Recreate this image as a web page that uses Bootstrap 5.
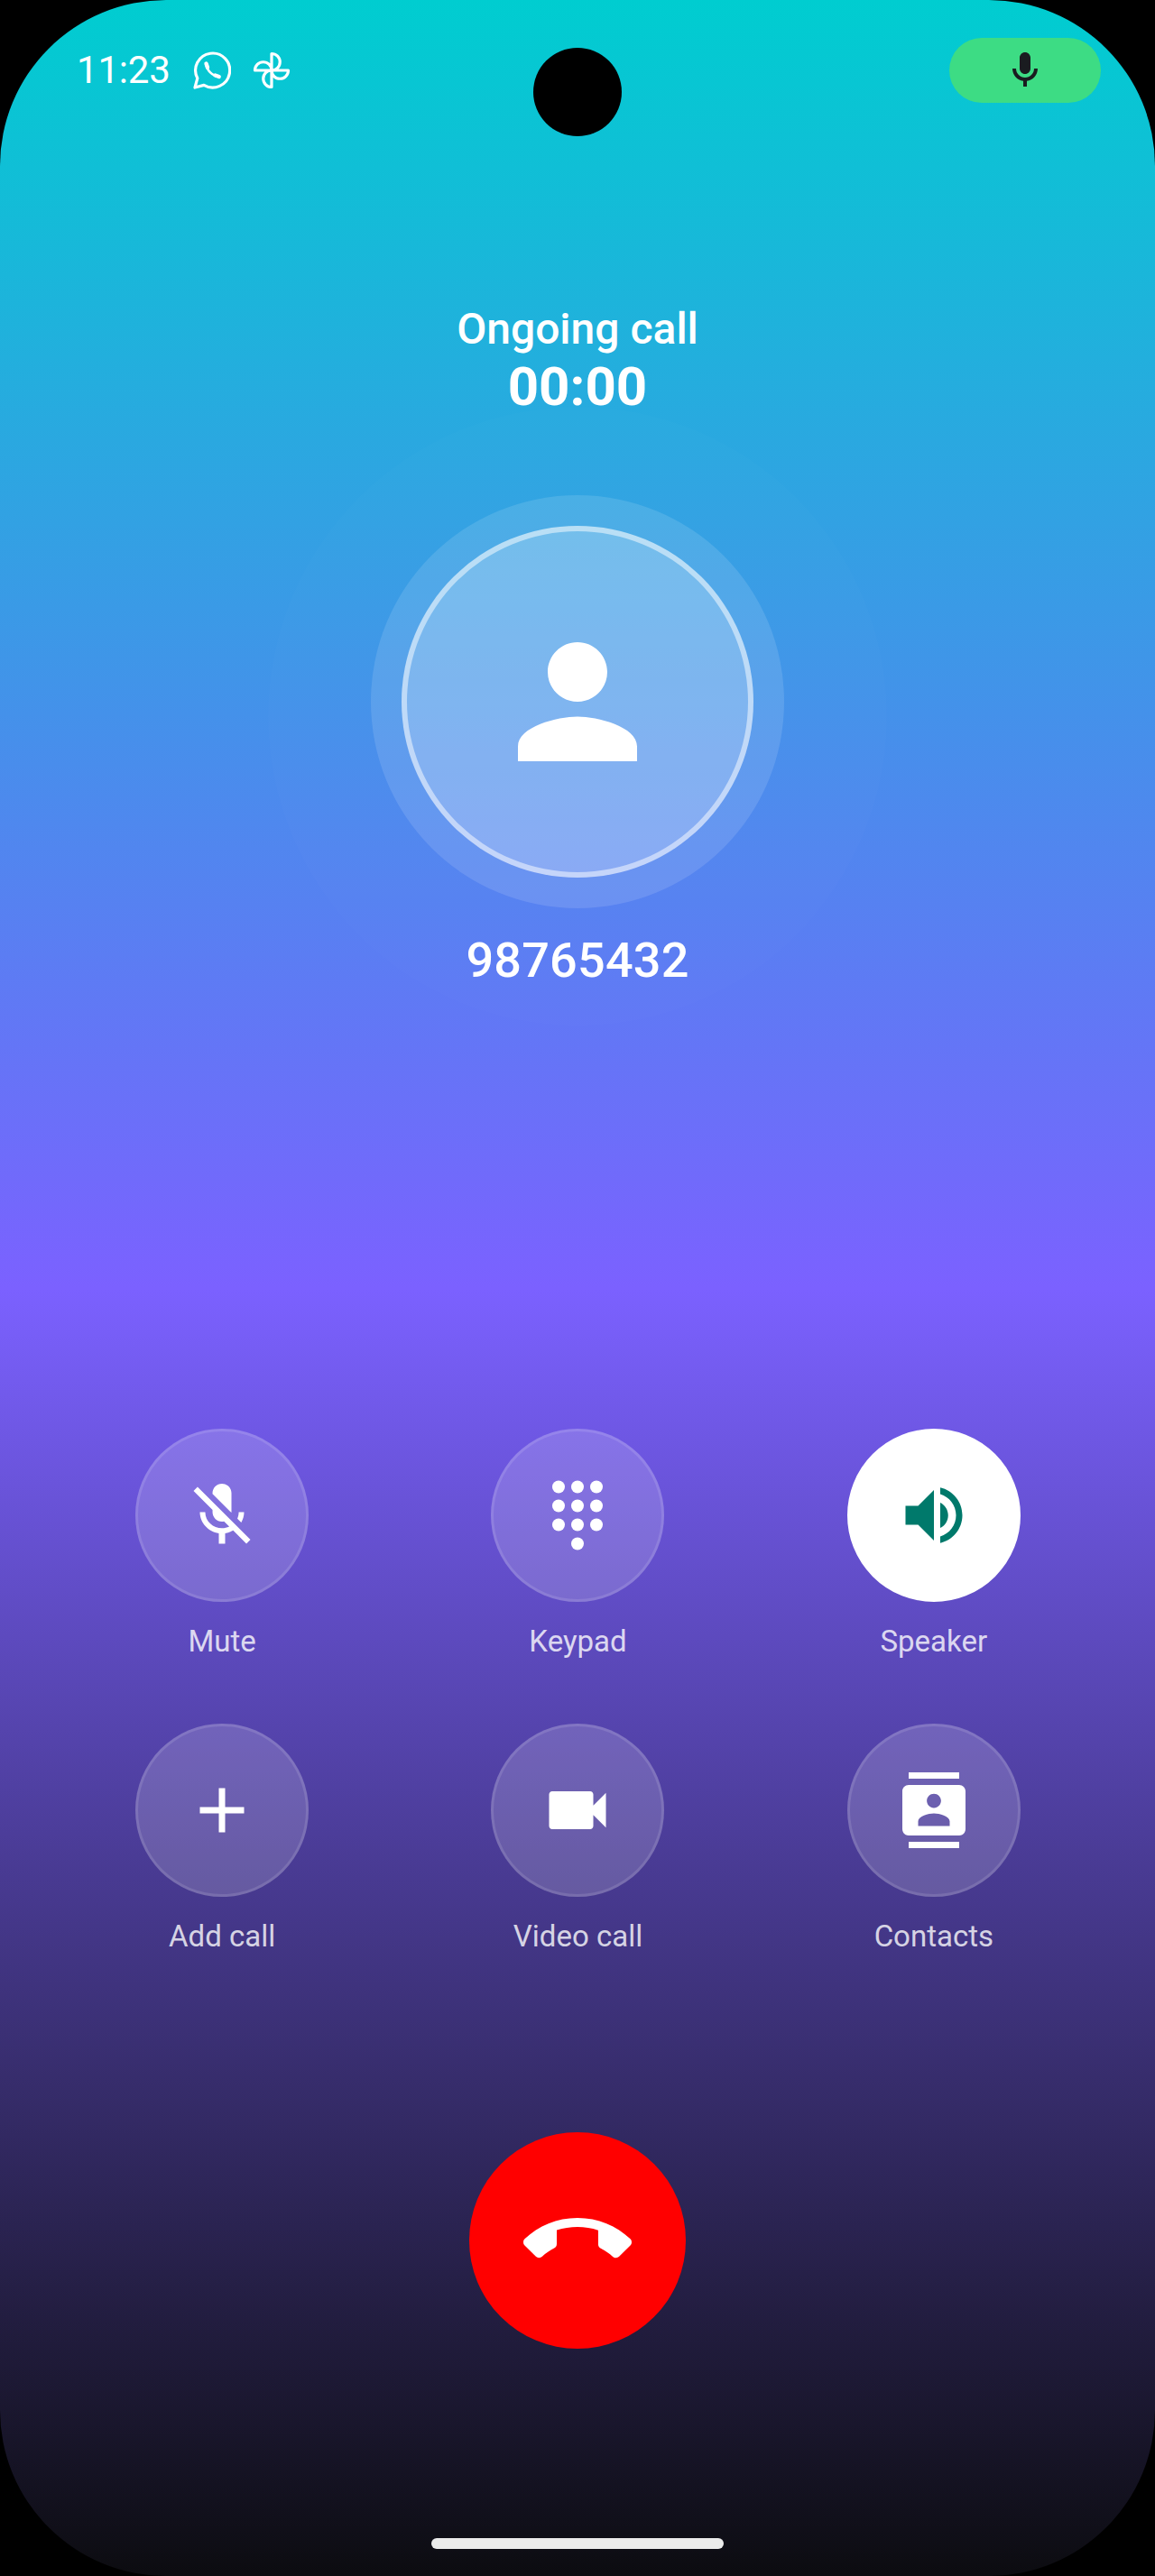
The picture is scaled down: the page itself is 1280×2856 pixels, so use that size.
<!DOCTYPE html>
<html lang="en">
<head>
  <meta charset="UTF-8">
  <title>Ongoing call</title>
  <link href="https://cdn.jsdelivr.net/npm/bootstrap@5.3.2/dist/css/bootstrap.min.css" rel="stylesheet">
  <style>
    body {
      background-color: #000;
      font-family: Roboto, "Noto Sans", sans-serif;
    }
    .call-screen {
      width: 1280px;
      height: 2856px;
      border-radius: 184px;
      background: linear-gradient(180deg, #00cdd0 0%, #7b61ff 50%, #0c0c10 100%);
      overflow: hidden;
    }
    .camera-hole {
      top: 53px;
      left: 591px;
      width: 98px;
      height: 98px;
      background-color: #000;
    }
    .status-row {
      height: 72px;
      margin-top: 42px;
      padding: 0 60px 0 85px;
    }
    .clock-text {
      font-size: 42px;
      line-height: 72px;
      margin-right: 25px;
      letter-spacing: -.2px;
    }
    .notif-icon { width: 42px; height: 42px; margin-right: 24px; }
    .mic-pill {
      width: 168px;
      height: 72px;
      background-color: #3ddc84;
    }
    .mic-pill svg { width: 48px; height: 48px; fill: #1a1c20; }
    .call-state {
      margin-top: 221px;
      font-size: 48px;
      font-weight: 500;
      line-height: 60px;
    }
    .call-timer {
      font-size: 60px;
      font-weight: 700;
      line-height: 68px;
    }
    .avatar-halo {
      top: 451px;
      left: 297px;
      width: 686px;
      height: 686px;
      background-color: rgba(255, 255, 255, .012);
    }
    .avatar-ring {
      width: 458px;
      height: 458px;
      margin-top: 86px;
      background-color: rgba(255, 255, 255, .12);
    }
    .avatar-disc {
      width: 390px;
      height: 390px;
      border: 6px solid rgba(255, 255, 255, .5);
      background-color: rgba(255, 255, 255, .22);
    }
    .avatar-disc svg { width: 198px; height: 198px; fill: #fff; }
    .caller-number {
      margin-top: 26px;
      font-size: 54px;
      font-weight: 500;
      line-height: 64px;
      letter-spacing: .2px;
    }
    .action-grid { margin-top: 487px; padding: 0 48px 0 49px; }
    .action-cell { height: 327px; }
    .action-btn {
      width: 192px;
      height: 192px;
      border: 3px solid rgba(255, 255, 255, .12);
      background-color: rgba(255, 255, 255, .17);
    }
    .action-btn svg { width: 84px; height: 84px; fill: #fff; }
    .action-btn.is-on { background-color: #fff; border-color: #fff; }
    .action-btn.is-on svg { fill: #00796b; }
    .action-label {
      margin-top: 22px;
      font-size: 33px;
      line-height: 44px;
      color: rgba(255, 255, 255, .8);
    }
    .end-btn {
      width: 240px;
      height: 240px;
      margin-top: 126px;
      background-color: #f00;
      border: 0;
    }
    .end-btn svg { width: 120px; height: 120px; fill: #fff; }
    .home-bar {
      width: 324px;
      height: 12px;
      margin-top: 210px;
      background-color: #ebebeb;
    }
  </style>
</head>
<body class="m-0">
  <div class="call-screen position-relative d-flex flex-column text-white text-center">
    <div class="camera-hole position-absolute rounded-circle"></div>
    <div class="avatar-halo position-absolute rounded-circle"></div>

    <div class="status-row d-flex align-items-center justify-content-between">
      <div class="d-flex align-items-center">
        <span class="clock-text">11:23</span>
        <svg class="notif-icon" viewBox="0 0 42 42" fill="none" stroke="#fff">
          <path stroke-width="3.2" stroke-linejoin="round" d="M2 40l2.8-10.2A19 19 0 1 1 12 37.4z"/>
          <path stroke-width="2.6" stroke-linecap="round" d="M14.5 14c.4 6.600 6.500 13 14 14"/>
          <path stroke-width="4.400" stroke-linecap="round" d="M14.500 13.500l1.500 4.200M24.500 26.500l4.200 1.500"/>
        </svg>
        <svg class="notif-icon" viewBox="0 0 42 42" fill="none" stroke="#fff" stroke-width="3.2" stroke-linejoin="round">
          <path d="M21 21V2.500a9.250 9.250 0 0 1 0 18.500zM21 21h18.500a9.250 9.250 0 0 1-18.500 0zM21 21v18.500a9.250 9.250 0 0 1 0-18.500zM21 21H2.500a9.250 9.250 0 0 1 18.500 0z"/>
        </svg>
      </div>
      <div class="mic-pill d-flex align-items-center justify-content-center rounded-pill">
        <svg viewBox="0 0 24 24"><path d="M12 14c1.660 0 3-1.340 3-3V5c0-1.660-1.340-3-3-3S9 3.340 9 5v6c0 1.660 1.340 3 3 3zm5-3c0 2.760-2.240 5-5 5s-5-2.240-5-5H5c0 3.530 2.610 6.430 6 6.920V21h2v-3.080c3.390-.49 6-3.390 6-6.920h-2z"/></svg>
      </div>
    </div>

    <div class="call-state">Ongoing call</div>
    <div class="call-timer">00:00</div>

    <div class="avatar-ring d-flex align-items-center justify-content-center rounded-circle mx-auto position-relative">
      <div class="avatar-disc d-flex align-items-center justify-content-center rounded-circle">
        <svg viewBox="0 0 24 24"><path d="M12 12c2.210 0 4-1.790 4-4s-1.790-4-4-4-4 1.790-4 4 1.790 4 4 4zm0 2c-2.670 0-8 1.340-8 4v2h16v-2c0-2.660-5.330-4-8-4z"/></svg>
      </div>
    </div>

    <div class="caller-number position-relative">98765432</div>

    <div class="action-grid row g-0">
      <div class="action-cell col-4 d-flex flex-column align-items-center">
        <div class="action-btn d-flex align-items-center justify-content-center rounded-circle">
          <svg viewBox="0 0 24 24"><path d="M19 11h-1.700c0 .74-.16 1.430-.43 2.050l1.230 1.230c.56-.98.9-2.090.9-3.280zm-4.020.17c0-.06.02-.11.02-.17V5c0-1.660-1.340-3-3-3S9 3.340 9 5v.18l5.980 5.990zM4.270 3L3 4.270l6.010 6.010V11c0 1.660 1.330 3 2.990 3 .22 0 .44-.03.65-.08l1.660 1.660c-.71.33-1.500.52-2.310.52-2.760 0-5.300-2.100-5.300-5.100H5c0 3.410 2.720 6.230 6 6.720V21h2v-3.280c.91-.13 1.770-.45 2.540-.9L19.730 21 21 19.730 4.270 3z"/></svg>
        </div>
        <div class="action-label">Mute</div>
      </div>
      <div class="action-cell col-4 d-flex flex-column align-items-center">
        <div class="action-btn d-flex align-items-center justify-content-center rounded-circle">
          <svg viewBox="0 0 24 24"><circle cx="6" cy="3" r="2"/><circle cx="12" cy="3" r="2"/><circle cx="18" cy="3" r="2"/><circle cx="6" cy="9" r="2"/><circle cx="12" cy="9" r="2"/><circle cx="18" cy="9" r="2"/><circle cx="6" cy="15" r="2"/><circle cx="12" cy="15" r="2"/><circle cx="18" cy="15" r="2"/><circle cx="12" cy="21" r="2"/></svg>
        </div>
        <div class="action-label">Keypad</div>
      </div>
      <div class="action-cell col-4 d-flex flex-column align-items-center">
        <div class="action-btn is-on d-flex align-items-center justify-content-center rounded-circle">
          <svg viewBox="0 0 24 24"><path d="M3 9v6h4l5 5V4L7 9H3zm13.500 3c0-1.770-1.020-3.290-2.500-4.030v8.050c1.480-.73 2.500-2.250 2.500-4.020zM14 3.230v2.060c2.890.86 5 3.540 5 6.710s-2.110 5.850-5 6.710v2.060c4.010-.91 7-4.490 7-8.770s-2.990-7.860-7-8.770z"/></svg>
        </div>
        <div class="action-label">Speaker</div>
      </div>
      <div class="action-cell col-4 d-flex flex-column align-items-center">
        <div class="action-btn d-flex align-items-center justify-content-center rounded-circle">
          <svg viewBox="0 0 24 24"><path d="M19 13h-6v6h-2v-6H5v-2h6V5h2v6h6v2z"/></svg>
        </div>
        <div class="action-label">Add call</div>
      </div>
      <div class="action-cell col-4 d-flex flex-column align-items-center">
        <div class="action-btn d-flex align-items-center justify-content-center rounded-circle">
          <svg viewBox="0 0 24 24"><path d="M17 10.500V7c0-.55-.45-1-1-1H4c-.55 0-1 .45-1 1v10c0 .55.45 1 1 1h12c.55 0 1-.45 1-1v-3.500l4 4v-11l-4 4z"/></svg>
        </div>
        <div class="action-label">Video call</div>
      </div>
      <div class="action-cell col-4 d-flex flex-column align-items-center">
        <div class="action-btn d-flex align-items-center justify-content-center rounded-circle">
          <svg viewBox="0 0 24 24"><path d="M20 0H4v2h16V0zM4 24h16v-2H4v2zM20 4H4c-1.100 0-2 .9-2 2v12c0 1.100.9 2 2 2h16c1.100 0 2-.9 2-2V6c0-1.100-.9-2-2-2zm-8 2.750c1.240 0 2.250 1.010 2.250 2.250s-1.010 2.250-2.250 2.250S9.750 10.240 9.750 9 10.760 6.750 12 6.750zM17 17H7v-1.500c0-1.670 3.330-2.500 5-2.500s5 .83 5 2.500V17z"/></svg>
        </div>
        <div class="action-label">Contacts</div>
      </div>
    </div>

    <button class="end-btn btn d-flex align-items-center justify-content-center rounded-circle mx-auto p-0">
      <svg viewBox="0 0 24 24"><path d="M12 9c-1.600 0-3.150.25-4.600.72v3.100c0 .39-.23.74-.56.9-.98.49-1.870 1.120-2.660 1.850-.18.18-.43.28-.7.28-.28 0-.53-.11-.71-.29L.29 13.080c-.18-.17-.29-.42-.29-.7 0-.28.11-.53.29-.71C3.340 8.780 7.460 7 12 7s8.660 1.780 11.710 4.670c.18.18.29.43.29.71 0 .28-.11.53-.29.71l-2.480 2.480c-.18.18-.43.29-.71.29-.27 0-.52-.11-.7-.28-.79-.74-1.690-1.360-2.670-1.850-.33-.16-.56-.5-.56-.9v-3.100C15.150 9.250 13.600 9 12 9z"/></svg>
    </button>

    <div class="home-bar rounded-pill mx-auto"></div>
  </div>
  <script src="https://cdn.jsdelivr.net/npm/bootstrap@5.3.2/dist/js/bootstrap.bundle.min.js"></script>
</body>
</html>
